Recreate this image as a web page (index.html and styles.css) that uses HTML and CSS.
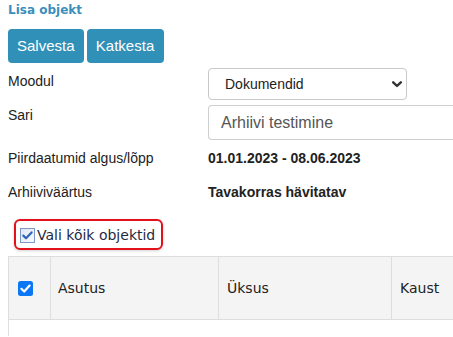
FILE: index.html
```html
<!DOCTYPE html>
<html lang="et">
<head>
<meta charset="utf-8">
<title>Lisa objekt</title>
<link rel="stylesheet" href="styles.css">
</head>
<body>
<div class="page">
  <h1 class="title">Lisa objekt</h1>
  <div class="actions">
    <button class="btn">Salvesta</button>
    <button class="btn">Katkesta</button>
  </div>
  <div class="row row-select">
    <div class="label">Moodul</div>
    <div class="select">
      <span class="select-text">Dokumendid</span>
      <svg class="chev" width="10" height="7" viewBox="0 0 10 7"><path d="M1.2 1.3 L5 5 L8.8 1.3" fill="none" stroke="#333" stroke-width="2.4" stroke-linecap="round" stroke-linejoin="round"/></svg>
    </div>
  </div>
  <div class="row row-input">
    <div class="label">Sari</div>
    <div class="input">Arhiivi testimine</div>
  </div>
  <div class="row row-info first">
    <div class="label">Piirdaatumid algus/lõpp</div>
    <div class="value">01.01.2023 - 08.06.2023</div>
  </div>
  <div class="row row-info second">
    <div class="label">Arhiiviväärtus</div>
    <div class="value">Tavakorras hävitatav</div>
  </div>
  <div class="select-all">
    <svg class="oldcheck" width="15" height="15" viewBox="0 0 15 15">
      <defs>
        <linearGradient id="cbg" x1="0" y1="0" x2="1" y2="1">
          <stop offset="0" stop-color="#dfe6f2"/>
          <stop offset="1" stop-color="#f8faff"/>
        </linearGradient>
      </defs>
      <rect x="0.5" y="0.5" width="14" height="14" fill="url(#cbg)" stroke="#7d97c8"/>
      <path d="M3.3 7.6 L6 10.3 L11.6 4.4" fill="none" stroke="#2f67b4" stroke-width="2.2" stroke-linecap="round" stroke-linejoin="round"/>
    </svg>
    <span class="select-all-text">Vali kõik objektid</span>
  </div>
  <div class="table">
    <div class="thead">
      <div class="th th-check">
        <svg width="15" height="15" viewBox="0 0 15 15"><rect x="0" y="0" width="15" height="15" rx="2.5" fill="#0b77f5"/><path d="M3.4 7.8 L6.2 10.5 L11.6 4.6" fill="none" stroke="#fff" stroke-width="2.2" stroke-linecap="round" stroke-linejoin="round"/></svg>
      </div>
      <div class="th th-a">Asutus</div>
      <div class="th th-b">Üksus</div>
      <div class="th th-c">Kaust</div>
    </div>
    <div class="tbody"></div>
  </div>
</div>
</body>
</html>
```
FILE: styles.css
```css
html, body {
  margin: 0;
  padding: 0;
  background: #fff;
  overflow: hidden;
}
body {
  width: 453px;
  height: 337px;
  font-family: "Liberation Sans", Arial, sans-serif;
  color: #333;
}
.page {
  padding: 0 0 0 8px;
}
.title {
  margin: 0;
  padding-top: 2px;
  height: 18px;
  font-family: "DejaVu Sans", Verdana, sans-serif;
  font-weight: bold;
  font-size: 12px;
  line-height: 16px;
  color: #3b8fbc;
}
.actions {
  display: flex;
  gap: 3px;
  margin-top: 9px;
}
.btn {
  height: 34px;
  padding: 0 9px;
  border: 0;
  border-radius: 4px;
  background: #3190b7;
  color: #fff;
  font-family: "Liberation Sans", Arial, sans-serif;
  font-size: 15px;
  line-height: 34px;
}
.btn:last-child {
  width: 77px;
  padding: 0;
}
.row {
  display: flex;
  align-items: flex-start;
}
.label {
  width: 200px;
  flex: none;
  font-size: 14px;
  line-height: 16px;
  color: #222;
}
.row-select {
  margin-top: 5px;
}
.row-select .label {
  padding-top: 5px;
}
.select {
  box-sizing: border-box;
  width: 199px;
  height: 32px;
  border: 1px solid #c9c9c9;
  border-radius: 4px;
  display: flex;
  align-items: center;
  justify-content: space-between;
  padding: 0 4px 0 16px;
}
.select-text {
  font-size: 14px;
  color: #222;
}
.chev {
  display: block;
  margin-top: 1px;
}
.row-input {
  margin-top: 5px;
}
.row-input .label {
  padding-top: 2px;
}
.input {
  box-sizing: border-box;
  width: 245px;
  height: 35px;
  border: 1px solid #cfcfcf;
  border-right: 0;
  border-radius: 4px 0 0 4px;
  padding: 0 12px;
  font-size: 16px;
  line-height: 33px;
  color: #555;
}
.row-info.first {
  padding-top: 10px;
}
.row-info.second {
  padding-top: 18px;
}
.value {
  font-weight: bold;
  font-size: 14px;
  line-height: 16px;
  color: #222;
}
.select-all {
  box-sizing: border-box;
  margin: 19px 0 0 6px;
  width: 149px;
  height: 31px;
  border: 2px solid #e3111b;
  border-radius: 6px;
  box-shadow: 0 1px 3px rgba(0,0,0,0.18);
  display: flex;
  align-items: center;
  padding-left: 4px;
  gap: 2px;
}
.oldcheck {
  display: block;
  flex: none;
  margin-top: 1px;
}
.select-all-text {
  font-family: "DejaVu Sans", Verdana, sans-serif;
  font-size: 14px;
  color: #1f2a44;
  white-space: nowrap;
}
.table {
  margin-top: 6px;
  width: 445px;
  border-left: 1px solid #dedede;
  box-sizing: border-box;
}
.thead {
  display: flex;
  height: 64px;
  background: #f4f4f4;
  border-top: 1px solid #dedede;
  border-bottom: 1px solid #dedede;
  box-sizing: border-box;
}
.th {
  box-sizing: border-box;
  display: flex;
  align-items: center;
  font-family: "DejaVu Sans", Verdana, sans-serif;
  font-size: 14px;
  color: #222;
  border-right: 1px solid #dedede;
}
.th-check {
  width: 42px;
  padding-left: 9px;
  padding-top: 1px;
}
.th-check svg {
  display: block;
}
.th-a {
  width: 168px;
  padding-left: 7px;
}
.th-b {
  width: 173px;
  padding-left: 8px;
}
.th-c {
  flex: 1;
  border-right: 0;
  padding-left: 8px;
}
.tbody {
  height: 16px;
}
```
